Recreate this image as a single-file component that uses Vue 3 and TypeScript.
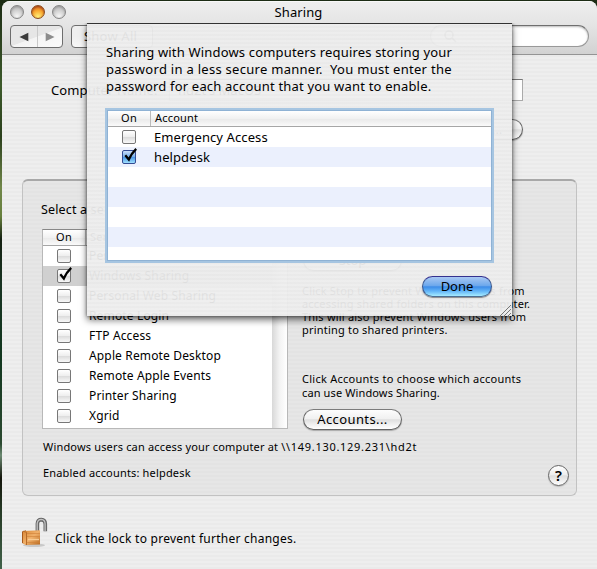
<script setup lang="ts">
import { ref } from 'vue'

interface Service { name: string; on: boolean }
interface Account { name: string; on: boolean }

const services = ref<Service[]>([
  { name: 'Personal File Sharing', on: false },
  { name: 'Windows Sharing', on: true },
  { name: 'Personal Web Sharing', on: false },
  { name: 'Remote Login', on: false },
  { name: 'FTP Access', on: false },
  { name: 'Apple Remote Desktop', on: false },
  { name: 'Remote Apple Events', on: false },
  { name: 'Printer Sharing', on: false },
  { name: 'Xgrid', on: false },
])
const selected = ref('Windows Sharing')

const accounts = ref<Account[]>([
  { name: 'Emergency Access', on: false },
  { name: 'helpdesk', on: true },
])
</script>

<template>
  <div class="desktop">
    <main class="window">
      <header class="chrome">
        <div class="titlebar">
          <div class="lights"><i class="light"></i><i class="light amber"></i><i class="light"></i></div>
          <h1>Sharing</h1>
        </div>
        <div class="toolbar">
          <div class="nav">
            <span><svg width="10" height="10" viewBox="0 0 10 10"><path d="M9.3 .8v8.4L.5 5z" fill="#3c3c3c" /></svg></span>
            <span><svg width="10" height="10" viewBox="0 0 10 10"><path d="M.7 .8v8.4L9.5 5z" fill="#8c8c8c" /></svg></span>
          </div>
          <div class="showall">Show All</div>
          <div class="search">
            <svg width="14" height="14" viewBox="0 0 14 14" fill="none" stroke="#777" stroke-width="1.6"><circle cx="6" cy="6" r="4" /><path d="M9 9l4 4" /></svg>
          </div>
        </div>
      </header>

      <section class="computer">
        <span class="label">Computer Name:</span>
        <div class="field">hd2t's MacOS</div>
      </section>
      <div class="editrow"><button class="aqua edit">Edit...</button></div>

      <section class="group">
        <p class="prompt">Select a service to change its settings.</p>
        <div class="columns">
          <div class="list">
            <div class="body">
              <div class="head"><span>On</span><span>Service</span></div>
              <div v-for="s in services" :key="s.name" class="row" :class="{ sel: s.name === selected }">
                <span class="cell"><i class="check"><svg v-if="s.on" class="tick" width="15" height="16" viewBox="0 0 15 16"><path d="M2.3 8.3L5.8 12.5Q8.3 6.5 13.2 1.8" /></svg></i></span>
                <span class="name">{{ s.name }}</span>
              </div>
            </div>
            <div class="scroll"></div>
          </div>
          <div class="detail">
            <button class="aqua stop">Stop</button>
            <p class="info">Click Stop to prevent Windows users from<br />accessing shared folders on this computer.<br />This will also prevent Windows users from<br />printing to shared printers.</p>
            <p class="info two"><span class="wide">Click Accounts to choose which accounts</span><br />can use Windows Sharing.</p>
            <button class="aqua accounts">Accounts...</button>
          </div>
        </div>
        <p class="status">Windows users can access your computer at <span class="path">\\149.130.129.231\hd2t</span></p>
        <div class="bottom">
          <p class="enabled">Enabled accounts: helpdesk</p>
          <button class="help">?</button>
        </div>
      </section>

      <footer class="lockbar">
        <svg width="28" height="31" viewBox="0 0 28 31">
          <defs>
            <linearGradient id="brass" x1="0" y1="0" x2="1" y2="1">
              <stop offset="0" stop-color="#d98736" /><stop offset=".5" stop-color="#f0b06a" /><stop offset="1" stop-color="#b8691f" />
            </linearGradient>
          </defs>
          <ellipse cx="12" cy="28.3" rx="11" ry="1.8" fill="#c9c9c9" />
          <path d="M15.4 14.5V6.5Q15.6 2.6 19.3 2.6Q23.3 2.8 23.3 7V14.2" fill="none" stroke="#666" stroke-width="3.6" />
          <path d="M15.2 14.5V6.5Q15.6 2.4 19.3 2.4Q23.1 2.8 23.1 7V14.2" fill="none" stroke="#c2c2c2" stroke-width="1.3" />
          <path d="M0 14.5L4 13.2V27.5L0 26z" fill="#a85a1c" />
          <path d="M1 14L18 13.3V27.5L4 28L1 26.5z" fill="url(#brass)" />
          <path d="M5 16.5H18M5 19.5H18M5 25.5H18" stroke="#cf8038" stroke-width=".6" />
          <path d="M1 14.2L4.5 15.3V28" fill="none" stroke="#b56a28" stroke-width="1" />
          <path d="M6 22.5H17" stroke="#f8cb93" stroke-width="1.4" />
        </svg>
        <span>Click the lock to prevent further changes.</span>
      </footer>
    </main>

    <div class="sheet">
      <p class="message"><span class="l1">Sharing with Windows computers requires storing your</span><br /><span class="l2">password in a less secure manner.&nbsp; You must enter the</span><br /><span class="l3">password for each account that you want to enable.</span></p>
      <div class="table">
        <div class="head"><span>On</span><span>Account</span></div>
        <div v-for="a in accounts" :key="a.name" class="row">
          <span class="cell"><i class="check" :class="{ blue: a.on }"><svg v-if="a.on" class="tick" width="15" height="16" viewBox="0 0 15 16"><path d="M2.3 8.3L5.8 12.5Q8.3 6.5 13.2 1.8" /></svg></i></span>
          <span class="name">{{ a.name }}</span>
        </div>
      </div>
      <div class="actions"><button class="aqua done">Done</button></div>
      <svg class="grip" width="12" height="12" viewBox="0 0 12 12" stroke="#777" stroke-width="1"><path d="M1 12L12 1M5 12L12 5M9 12L12 9" /></svg>
    </div>
  </div>
</template>

<style>
body { margin: 0; background: #222; }
</style>

<style scoped>
* { box-sizing: border-box; }
p, h1 { margin: 0; font-weight: 400; }
button { font: inherit; letter-spacing: inherit; color: #000; padding: 0; }
.desktop {
  position: relative; width: 597px; height: 569px; overflow: hidden;
  font: 13px/16px "Noto Sans", "Open Sans", sans-serif; color: #000; white-space: nowrap;
  background: linear-gradient(180deg, #1c2b14 0, #3d5a2b 15%, #2b401d 24%, #71874a 33%, #67803d 38%, #152112 42%, #183422 50%, #12371f 63%, #2c4a31 78%, #6c8a72 80%, #14160c 84%, #263b26 90%, #42624a 100%);
}
.window {
  margin: 1px 0 0 2px; width: 595px; height: 568px; overflow: hidden; border-radius: 8px 8px 0 0;
  background: repeating-linear-gradient(180deg, #eeeeee 0, #eeeeee 2px, #eaeaea 2px, #eaeaea 4px);
}
.chrome { height: 54px; background: linear-gradient(#eeeeee, #e4e4e4 45%, #d2d2d2); border-bottom: 1px solid #949494; border-top: 1px solid #f8f8f8; }
.titlebar { height: 23px; display: grid; grid-template-columns: 86px 1fr 88px; align-items: start; }
.titlebar h1 { font-size: 13px; line-height: 20px; text-align: center; letter-spacing: .1px; }
.lights { display: flex; gap: 7px; padding: 3px 0 0 8px; }
.light { width: 14px; height: 14px; border-radius: 50%; border: 1px solid #858585; background: radial-gradient(circle at 50% 85%, #f6f6f6, #c9c9c9 60%, #aaa); box-shadow: inset 0 1px 2px #999; }
.light.amber { border-color: #8a4c20; background: radial-gradient(circle at 50% 90%, #fff37c, #f9a931 50%, #d9661e 90%); box-shadow: inset 0 1px 2px #9b4118; }
.toolbar { display: flex; align-items: flex-start; padding-left: 8px; }
.nav { width: 53px; height: 23px; display: grid; grid-template-columns: 1fr 1fr; border: 1px solid #6d6d6d; border-radius: 4px; background: linear-gradient(160deg, #e6e6e6 50%, #f4f4f4 52%, #fafafa); }
.nav span { display: flex; align-items: center; justify-content: center; }
.nav span + span { border-left: 1px solid #c9c9c9; }
.showall { margin-left: 8px; width: 82px; height: 23px; border: 1px solid #6d6d6d; border-radius: 4px; background: linear-gradient(#efefef 50%, #f8f8f8); padding-left: 12px; line-height: 21px; letter-spacing: .2px; }
.search { margin-left: 277px; width: 159px; height: 22px; border: 1px solid #999; border-top-color: #6f6f6f; border-radius: 11px; background: #fff; box-shadow: inset 0 1px 2px #bbb; padding: 3px 0 0 12px; }
.computer { display: flex; align-items: center; margin-top: 23px; padding-left: 49px; height: 24px; }
.label { width: 118px; letter-spacing: .1px; }
.field { width: 354px; height: 22px; border: 1px solid #aaa; border-top-color: #777; background: #fff; padding-left: 8px; line-height: 20px; }
.editrow { display: flex; justify-content: flex-end; padding: 17px 74px 0 0; height: 77px; }
.aqua { height: 21px; border: 1px solid #636363; border-top-color: #7c7c7c; border-radius: 11px; display: block; line-height: 18px; padding-bottom: 1px; text-align: center; background: linear-gradient(#fdfdfd, #f1f1f1 45%, #dfdfdf 52%, #f0f0f0 75%, #fff); box-shadow: 0 1px 1px #aaa; }
.edit { width: 75px; }
.group { margin-left: 20px; width: 555px; height: 317px; border: 1px solid #c2c2c2; border-top: 2px solid #a8a8a8; border-radius: 6px; padding: 20px 0 0 18px; background: repeating-linear-gradient(180deg, #e6e6e6 0, #e6e6e6 2px, #e3e3e3 2px, #e3e3e3 4px); }
.prompt { font-size: 12.5px; line-height: 18px; height: 28px; letter-spacing: .15px; }
.columns { display: flex; margin-left: 1px; }
.list { width: 246px; height: 200px; border: 1px solid #b8b8b8; border-top-color: #888; background: #fff; display: flex; }
.body { flex: 1; }
.scroll { width: 15px; background: linear-gradient(90deg, #d8d8d8, #f3f3f3 50%, #fff); }
.head { display: grid; grid-template-columns: 43px 1fr; height: 16px; font-size: 11px; line-height: 14px; border-bottom: 1px solid #a6a6a6; background: linear-gradient(#fff, #f1f1f1 50%, #e9e9e9 52%, #fafafa); letter-spacing: .2px; }
.head span:first-child { text-align: center; border-right: 1px solid #bbb; }
.head span:last-child { padding-left: 4px; }
.row { display: grid; grid-template-columns: 43px 1fr; height: 20px; align-items: center; }
.row.sel { background: #d0d0d0; }
.row .name { padding-left: 3px; line-height: 20px; letter-spacing: .1px; }
.list .name { font-size: 12px; letter-spacing: .15px; }
.cell { display: flex; justify-content: center; padding-right: 2px; }
.check { width: 14px; height: 14px; border: 1px solid #777; border-radius: 2px; background: linear-gradient(#fff, #eee 48%, #ddd 54%, #f8f8f8); display: flex; position: relative; }
.check.blue { border-color: #334b93; background: linear-gradient(#cadefa, #76aeea 48%, #4d98e6 54%, #a0e1ff); }
.tick { position: absolute; left: 0; top: -4px; fill: none; stroke: #000; stroke-width: 2.3; }
.detail { padding-left: 15px; }
.stop { width: 99px; margin-top: 21px; }
.info { margin-left: -1px; font-size: 11px; line-height: 13px; margin-top: 13px; height: 53px; letter-spacing: .2px; }
.info.two { line-height: 14px; margin-top: 35px; height: 29px; letter-spacing: .12px; }
.wide { letter-spacing: .26px; }
.accounts { width: 99px; margin-top: 8px; letter-spacing: .4px; }
.status { font-size: 11px; line-height: 14px; margin: 10px 0 0 2px; letter-spacing: .17px; }
.path { letter-spacing: .7px; }
.bottom { display: flex; justify-content: space-between; margin: 11px 7px 0 2px; }
.enabled { font-size: 11px; line-height: 14px; padding-top: 1px; letter-spacing: .17px; }
.help { width: 21px; height: 21px; border-radius: 50%; border: 1px solid #666; background: linear-gradient(#fff, #eee 45%, #ddd 52%, #fff); font-size: 15px; font-weight: 600; line-height: 19px; box-shadow: 0 1px 1px #bbb; }
.lockbar { display: flex; padding: 21px 0 0 20px; }
.lockbar span { padding-left: 5px; padding-top: 13px; line-height: 18px; font-size: 12px; letter-spacing: .25px; }
.sheet {
  position: absolute; left: 87px; top: 23px; width: 425px; height: 293px; border-top: 1px solid #333;
  background: repeating-linear-gradient(180deg, rgba(238,238,238,.95) 0, rgba(238,238,238,.95) 2px, rgba(234,234,234,.95) 2px, rgba(234,234,234,.95) 4px);
  box-shadow: 0 4px 7px rgba(0,0,0,.55), 0 0 3px rgba(0,0,0,.5); clip-path: inset(0 -12px -16px -12px);
  padding: 20px 20px 0 19px;
}
.message { line-height: 17px; height: 66px; }
.l1 { letter-spacing: .17px; }
.l2 { letter-spacing: .28px; }
.l3 { letter-spacing: .19px; }
.table { margin-left: 1px; width: 385px; height: 151px; border: 1px solid #8fb2d4; box-shadow: 0 0 0 2px #a6c5e1; background: repeating-linear-gradient(180deg, #fff 0, #fff 20px, #ebf0fd 20px, #ebf0fd 40px) 0 16px; }
.actions { display: flex; justify-content: flex-end; padding-top: 15px; }
.done { width: 70px; border-color: #35318f #37548c #4b6e94; background: linear-gradient(#a9c8f3, #6da8ec 45%, #3d8ce8 52%, #64b6f8 75%, #a5ebff); box-shadow: 0 1px 1px #888; }
.grip { position: absolute; right: 1px; bottom: 0; }
</style>
